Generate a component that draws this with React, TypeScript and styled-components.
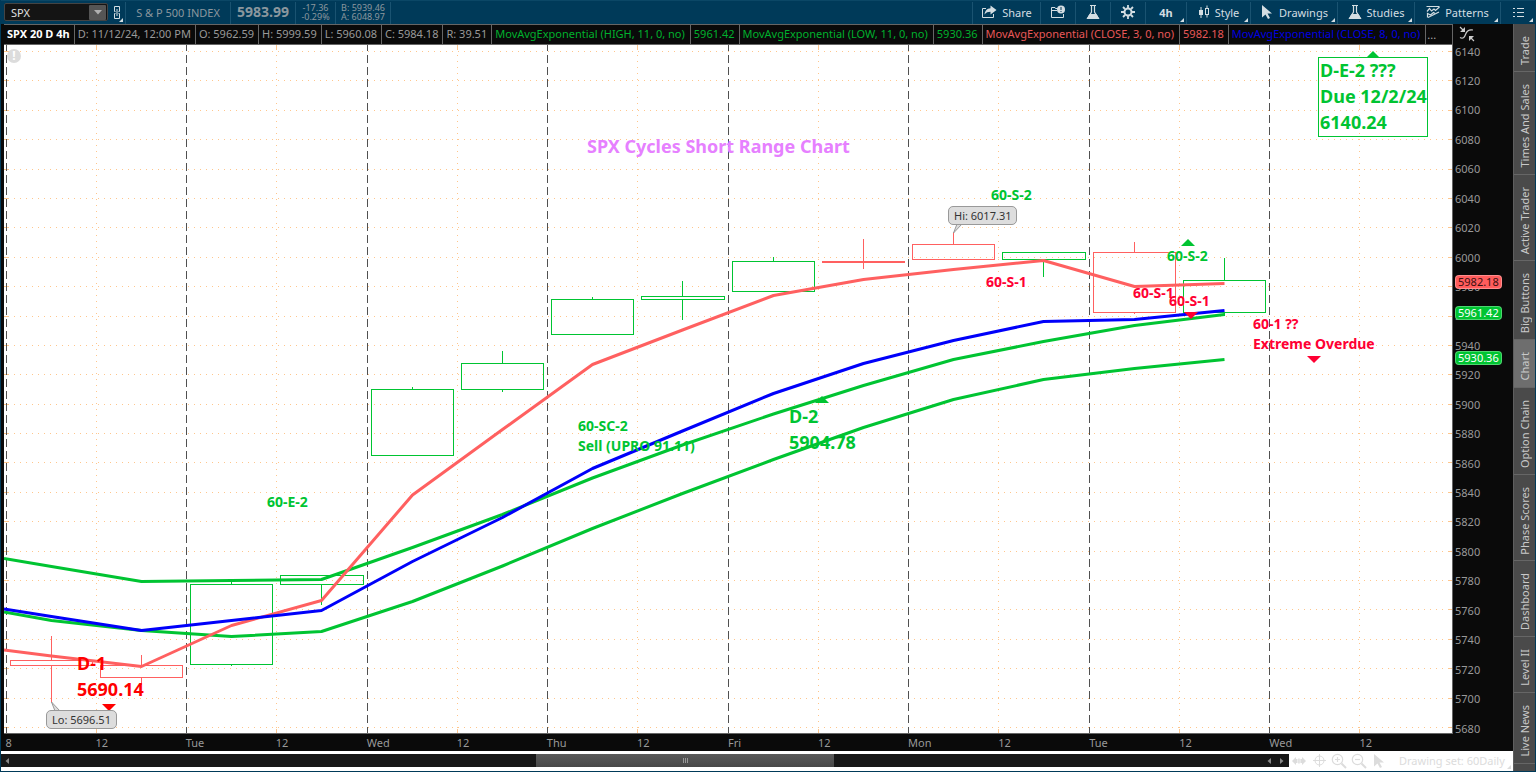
import React from "react";
import styled, { createGlobalStyle, css } from "styled-components";

const GREEN = "#00c432";
const RED = "#ff6060";
const BLUE = "#0000fa";
const ALERT = "#ff0033";

const GlobalStyle = createGlobalStyle`
  * { box-sizing: border-box; }
  html, body { margin: 0; height: 100%; }
  body { background: #003a59; font-family: "Noto Sans", "Open Sans", sans-serif; font-size: 11px; overflow: hidden; }
  button, input { font: inherit; color: inherit; margin: 0; padding: 0; border: 0; background: none; }
  svg { display: block; }
`;

/* ---------- layout ---------- */

const Page = styled.div`
  height: 100vh;
  display: flex;
  flex-direction: column;
  padding: 0 1px 1px;
  background: #003a59;
`;

const Body = styled.div`
  flex: 1;
  min-height: 0;
  display: flex;
`;

const Main = styled.main`
  flex: 1;
  min-width: 0;
  display: flex;
  flex-direction: column;
  background: #ffffff;
`;

const ChartPanel = styled.section`
  flex: 1;
  min-height: 0;
  display: grid;
  grid-template-columns: minmax(0, 1fr) 60px;
  grid-template-rows: 21px minmax(0, 1fr) 17px;
  padding-left: 3px;
  background: #0a0a0a;
`;

/* ---------- top bar ---------- */

const TopBar = styled.header`
  height: 24px;
  flex: none;
  display: flex;
  align-items: stretch;
  padding: 1px 0 0 3px;
  color: #d3dde2;
  border-top: 1px solid #0b4766;
`;

const SymbolBox = styled.div`
  display: flex;
  align-items: center;
  width: 104px;
  height: 18px;
  margin-top: 1px;
  padding-right: 1px;
  border: 1px solid #444;
  border-radius: 2px;
  background: #141414;
`;

const SymbolInput = styled.input`
  flex: 1;
  min-width: 0;
  padding-left: 6px;
  color: #e0e0e0;
  outline: none;
`;

const DropButton = styled.button`
  width: 17px;
  height: 15px;
  display: grid;
  place-items: center;
  background: #555;
  border-radius: 1px;
`;

const LinkButton = styled.button`
  position: relative;
  width: 17px;
  padding-bottom: 2px;
  display: grid;
  place-items: center;
`;

const Corner = styled.span`
  position: absolute;
  right: 2px;
  bottom: 2px;
  border-style: solid;
  border-width: 0 0 4px 4px;
  border-color: transparent transparent #d3dde2 transparent;
`;

const Quote = styled.div<{ $w: number }>`
  width: ${(p) => p.$w}px;
  padding-bottom: 2px;
  display: flex;
  flex-direction: column;
  justify-content: center;
  align-items: center;
  border-left: 1px solid #1a5371;
  color: #8b979e;
  white-space: nowrap;
`;

const Last = styled.strong`
  font-size: 14px;
  line-height: 20px;
  font-weight: 700;
`;

const Small = styled.span`
  font-size: 9px;
  line-height: 9px;
`;

const Spacer = styled.div`
  flex: 1;
  border-left: 1px solid #1a5371;
`;

const ToolButton = styled.button<{ $w: number; $bold?: boolean }>`
  position: relative;
  width: ${(p) => p.$w}px;
  padding-bottom: 2px;
  display: flex;
  align-items: center;
  justify-content: center;
  gap: 5px;
  border-left: 1px solid #1a5371;
  font-weight: ${(p) => (p.$bold ? 700 : 400)};
  white-space: nowrap;
`;

/* ---------- study legend ---------- */

const Legend = styled.div`
  display: flex;
  min-width: 0;
  border: solid #666;
  border-width: 1px 1px 1px 0;
  background: #0a0a0a;
  overflow: hidden;
`;

const LegendCell = styled.span<{ $color?: string; $strong?: boolean; $wide?: boolean }>`
  flex: none;
  padding: 0 ${(p) => (p.$wide ? 5 : 4)}px 0 3px;
  border-right: 1px solid #666;
  line-height: 18px;
  font-weight: ${(p) => (p.$strong ? 700 : 400)};
  color: ${(p) => p.$color || "#999"};
  white-space: nowrap;
`;

const MoreButton = styled.button`
  flex: 1;
  padding-left: 1px;
  text-align: left;
  color: #aaa;
`;

const AxisHead = styled.div`
  padding: 2px 0 0 6px;
`;

/* ---------- plot ---------- */

const Plot = styled.div`
  position: relative;
  min-height: 0;
  background: #ffffff;
  border: solid #666;
  border-width: 0 1px 1px 0;
  overflow: hidden;
`;

const PlotSvg = styled.svg`
  width: 100%;
  height: 100%;
`;

const Note = styled.div<{ $color: string; $large?: boolean; $boxed?: boolean }>`
  position: absolute;
  color: ${(p) => p.$color};
  font-weight: 700;
  white-space: pre;
  ${(p) =>
    p.$large
      ? css`
          font-size: 18px;
          line-height: 26px;
        `
      : css`
          font-size: 14px;
          line-height: 20px;
        `}
  ${(p) =>
    p.$boxed &&
    css`
      outline: 1px solid ${p.$color};
      outline-offset: -1px;
      padding: 0 1px 2px 2px;
    `}
`;

const Callout = styled.div`
  position: absolute;
  height: 19px;
  padding: 0 5px;
  border: 1px solid #999;
  border-radius: 5px;
  background: #dddddd;
  color: #333;
  line-height: 17px;
  white-space: nowrap;
`;

const WarnBadge = styled.span`
  position: absolute;
  left: 3px;
  top: 4px;
  width: 14px;
  height: 14px;
  border-radius: 50%;
  background: #dcdcdc;
  color: #fff;
  font-size: 12px;
  font-weight: 700;
  line-height: 14px;
  text-align: center;
`;

const PriceAxis = styled.div`
  position: relative;
  color: #999;
`;

const PriceTick = styled.span`
  position: absolute;
  left: 2px;
  line-height: 16px;
  transform: translateY(-50%);
`;

const PriceTag = styled.span<{ $bg: string; $fg: string }>`
  position: absolute;
  left: 2px;
  height: 14px;
  padding: 0 2px;
  border: 1px solid rgba(255, 255, 255, 0.3);
  border-radius: 4px;
  background: ${(p) => p.$bg};
  background-clip: border-box;
  color: ${(p) => p.$fg};
  line-height: 12px;
  transform: translateY(-50%);
`;

const TimeAxis = styled.div`
  position: relative;
  color: #999;
`;

const TimeTick = styled.span`
  position: absolute;
  top: 1px;
  line-height: 16px;
`;

/* ---------- bottom strip ---------- */

const BottomBar = styled.footer`
  flex: none;
  height: 20px;
  display: flex;
  align-items: center;
  padding: 0 0 1px;
`;

const ScrollTrack = styled.div`
  flex: 1;
  height: 13px;
  display: flex;
  align-items: center;
  background: #171717;
`;

const ScrollArrow = styled.button`
  width: 13px;
  height: 13px;
  padding-right: 2px;
  display: grid;
  place-items: center;
`;

const ScrollLane = styled.div`
  flex: 1;
  height: 13px;
  display: grid;
  grid-template-columns: 522fr 298fr 429fr;
`;

const Thumb = styled.div`
  grid-column: 2;
  display: grid;
  place-items: center;
  background: linear-gradient(#5a5a5a, #484848);
`;

const DrawTools = styled.div`
  position: relative;
  width: 224px;
  display: flex;
  align-items: center;
  color: #dcdcdc;
`;

const DrawTool = styled.button`
  width: 20px;
  height: 16px;
  display: grid;
  place-items: center;
  flex: none;
`;

const DrawingSet = styled.button`
  margin-left: 10px;
  line-height: 16px;
  white-space: nowrap;
`;

const GrayCorner = styled(Corner)`
  bottom: 0;
  border-bottom-color: #dcdcdc;
`;

/* ---------- side tabs ---------- */

const SideTabs = styled.nav`
  flex: none;
  width: 22px;
  display: flex;
  flex-direction: column;
  background: #4a4a4a;
  border-left: 1px solid #5e5e5e;
  overflow: hidden;
`;

const SideTab = styled.button<{ $active?: boolean }>`
  flex: none;
  display: flex;
  align-items: center;
  justify-content: center;
  padding: 12px 0 6px;
  border-bottom: 1px solid #666;
  background: ${(p) => (p.$active ? "#6e6e6e" : "#4a4a4a")};
  color: #c9c9c9;
`;

const Vertical = styled.span`
  writing-mode: vertical-rl;
  transform: rotate(180deg);
  line-height: 20px;
  white-space: nowrap;
`;

/* ---------- data ---------- */

const VIEW = { x: 4, y: 45, w: 1448, h: 688 };
const left = (x: number) => `${((x - VIEW.x) / VIEW.w) * 100}%`;
const top = (y: number) => `${((y - VIEW.y) / VIEW.h) * 100}%`;
const priceY = (p: number) => 51.5 + (6140 - p) * 1.4696;
const barX = (i: number) => 51.6 + 90.23 * i;
const snap = (v: number) => Math.floor(v) + 0.5;

const prices = Array.from({ length: 24 }, (_, i) => 6140 - i * 20);
const days = ["8", "Tue", "Wed", "Thu", "Fri", "Mon", "Tue", "Wed"];
const dayX = (i: number) => snap(6.35 + 180.45 * i);
const noonX = (i: number) => snap(96.4 + 180.45 * i);

type Candle = { up: boolean; open: number; close: number; high?: number; low?: number };
const candles: Candle[] = [
  { up: false, open: 660.5, close: 665.5, high: 636, low: 703 },
  { up: false, open: 665.5, close: 677.5, high: 655, low: 685 },
  { up: true, open: 584.5, close: 664.5, high: 582, low: 666 },
  { up: true, open: 575.5, close: 584.5, low: 605 },
  { up: true, open: 389.5, close: 455.5, high: 387 },
  { up: true, open: 363.5, close: 389.5, high: 351, low: 392 },
  { up: true, open: 299.5, close: 334.5, high: 297 },
  { up: true, open: 296.5, close: 299.5, high: 281, low: 320 },
  { up: true, open: 261.5, close: 291.5, high: 257 },
  { up: false, open: 261.5, close: 262.5, high: 239, low: 269 },
  { up: false, open: 244.5, close: 259.5, high: 232 },
  { up: true, open: 252.5, close: 259.5, low: 277 },
  { up: false, open: 252.5, close: 312.5, high: 242, low: 314 },
  { up: true, open: 280.5, close: 312.5, high: 258, low: 316 },
];

const averages: { color: string; start: number; values: number[] }[] = [
  { color: GREEN, start: 558.5, values: [566.5, 581.5, 580.5, 579.5, 547.5, 514.5, 478, 445, 414, 385.5, 359.5, 341.5, 325.5, 314.5] },
  { color: GREEN, start: 612, values: [620.5, 630.5, 636.5, 631.5, 601.5, 566, 528.5, 493.5, 459.5, 427.5, 399.5, 379.5, 368.5, 359.5] },
  { color: RED, start: 650, values: [656, 666.5, 625.5, 600.5, 495, 429.5, 364.5, 330, 295.5, 279.5, 269.5, 260.5, 286.5, 283.5] },
  { color: BLUE, start: 609, values: [616.5, 630.5, 620.5, 610.5, 561.5, 517.5, 468.5, 431, 393.5, 363.5, 340.5, 321.5, 319.5, 310.5] },
];

const notes = [
  { x: 587, y: 133, text: "SPX Cycles Short Range Chart", color: "#e680ff", large: true },
  { x: 267, y: 492, text: "60-E-2", color: GREEN },
  { x: 578, y: 416, text: "60-SC-2\nSell (UPRO 91.11)", color: GREEN },
  { x: 789, y: 403, text: "D-2\n5904.78", color: GREEN, large: true },
  { x: 991, y: 185, text: "60-S-2", color: GREEN },
  { x: 986, y: 272, text: "60-S-1", color: ALERT },
  { x: 1133, y: 283, text: "60-S-1", color: ALERT },
  { x: 1169, y: 291, text: "60-S-1", color: ALERT },
  { x: 1167, y: 246, text: "60-S-2", color: GREEN },
  { x: 1253, y: 314, text: "60-1 ??\nExtreme Overdue", color: ALERT },
  { x: 77, y: 650, text: "D-1\n5690.14", color: "#ff0000", large: true },
  { x: 1318, y: 57, text: "D-E-2 ???\nDue 12/2/24\n6140.24", color: GREEN, large: true, boxed: true },
];

const arrows = [
  { x: 1373, y: 58, up: true, color: GREEN },
  { x: 1188, y: 246, up: true, color: GREEN },
  { x: 822, y: 403, up: true, color: GREEN },
  { x: 109, y: 704, up: false, color: "#ff0000" },
  { x: 1191, y: 312, up: false, color: ALERT },
  { x: 1314, y: 356, up: false, color: ALERT },
];

const legend = [
  { text: "SPX 20 D 4h", color: "#ffffff", strong: true },
  { text: "D: 11/12/24, 12:00 PM" },
  { text: "O: 5962.59" },
  { text: "H: 5999.59" },
  { text: "L: 5960.08" },
  { text: "C: 5984.18" },
  { text: "R: 39.51" },
  { text: "MovAvgExponential (HIGH, 11, 0, no)", color: "#00b02d", wide: true },
  { text: "5961.42", color: "#00b02d" },
  { text: "MovAvgExponential (LOW, 11, 0, no)", color: "#00b02d", wide: true },
  { text: "5930.36", color: "#00b02d" },
  { text: "MovAvgExponential (CLOSE, 3, 0, no)", color: "#e85858", wide: true },
  { text: "5982.18", color: "#e85858" },
  { text: "MovAvgExponential (CLOSE, 8, 0, no)", color: "#0000e0", wide: true },
];

const tabs = ["Trade", "Times And Sales", "Active Trader", "Big Buttons", "Chart", "Option Chain", "Phase Scores", "Dashboard", "Level II", "Live News"];

/* ---------- icons ---------- */

const ShareIcon = () => (
  <svg width="16" height="14" viewBox="0 0 16 14" fill="none" stroke="currentColor">
    <path d="M5 3.500H1.500v9h11V9" />
    <path d="M9.500 0.500l6 4.500-6 4.500V6.800C7 6.800 5 7.500 3.500 9.500 4 6 6 3.300 9.500 3.200z" fill="currentColor" stroke="none" />
  </svg>
);

const AlertFolderIcon = () => (
  <svg width="16" height="14" viewBox="0 0 16 14" fill="none" stroke="currentColor">
    <path d="M8 3.500H5.500L5 2.500H1.500v10h12V9M1.500 5.500H7" />
    <circle cx="11" cy="4.500" r="4" fill="currentColor" stroke="none" />
    <path d="M11 2v3M11 6v1" stroke="#003a59" />
  </svg>
);

const FlaskIcon = () => (
  <svg width="14" height="16" viewBox="0 0 14 16" fill="none" stroke="currentColor">
    <path d="M4 1.500h6M5.500 2v6L1.500 14.500h11L8.500 8V2" strokeWidth="1.200" />
    <path d="M3.700 10.500h6.600l2.200 4h-11z" fill="currentColor" />
  </svg>
);

const GearIcon = () => (
  <svg width="14" height="14" viewBox="0 0 14 14" fill="none" stroke="currentColor">
    <circle cx="7" cy="7" r="3.500" strokeWidth="2" />
    <path d="M7 0v3M7 11v3M0 7h3M11 7h3M2 2l2 2M10 10l2 2M12 2l-2 2M4 10l-2 2" strokeWidth="1.800" />
  </svg>
);

const CandleIcon = () => (
  <svg width="12" height="14" viewBox="0 0 12 14" fill="none" stroke="currentColor">
    <path d="M3 2v11M9 0.500v3M9 9.500v3" />
    <rect x="1" y="5" width="4" height="5" fill="currentColor" stroke="none" />
    <rect x="7.500" y="3.500" width="3" height="6" />
  </svg>
);

const PointerIcon = () => (
  <svg width="14" height="14" viewBox="0 0 14 14" fill="currentColor">
    <path d="M2 0l10 8.500H7.500L10 13l-2 1-2.500-4.500L2 12.500z" />
  </svg>
);

const PatternsIcon = () => (
  <svg width="14" height="14" viewBox="0 0 14 14" fill="none" stroke="currentColor" strokeWidth="1.200">
    <path d="M0.500 1.500H13.500M1 6.500l2.500-3L5.500 6l2.500-2 1.500 1.500 4-3.500M2 12.500L13 7" />
    <path d="M1.500 12.500V8.500l3 1.500 3-2.500 1.500 1" />
  </svg>
);

const ListIcon = () => (
  <svg width="11" height="11" viewBox="0 0 11 11" stroke="currentColor">
    <path d="M0 1.500h2M4 1.500h7M0 5.500h2M4 5.500h7M0 9.500h2M4 9.500h7" />
  </svg>
);

const ChainIcon = () => (
  <svg width="6" height="13" viewBox="0 0 6 13" fill="none" stroke="currentColor">
    <path d="M0.500 5.500V0.500h5v5M0.500 7.500v5h5v-5M3 3v7M0.500 5.500h1M4.500 5.500h1M0.500 7.500h1M4.500 7.500h1" />
  </svg>
);

const FitIcon = () => (
  <svg width="16" height="16" viewBox="0 0 16 16" fill="none" stroke="#cccccc" strokeWidth="1.200">
    <path d="M1 1l3.500 3.500M15 15l-3.500-3.500" />
    <path d="M6 1v5H1zM10 15v-5h5z" fill="#cccccc" stroke="none" />
    <path d="M1 11.500c3 1.500 4.500 0 5.500-3S9 3 14 4" />
  </svg>
);

const Chevron = ({ dir }: { dir: "left" | "right" }) => (
  <svg width="4" height="6" viewBox="0 0 4 6" fill="#888888">
    <path d={dir === "left" ? "M4 0v6L0.500 3z" : "M0 0v6l3.500-3z"} />
  </svg>
);

const PanIcon = () => (
  <svg width="14" height="8" viewBox="0 0 14 8" fill="currentColor">
    <path d="M0 4l4-4v2h1.500v4H4v2zM14 4l-4-4v2H8.500v4H10v2zM6 1.500h.800v5H6zM7.300 1.500h.8v5h-.8z" />
  </svg>
);

const CrosshairIcon = () => (
  <svg width="13" height="13" viewBox="0 0 13 13" fill="none" stroke="currentColor">
    <circle cx="6.500" cy="6.500" r="4.500" />
    <path d="M6.500 0v13M0 6.500h13" />
  </svg>
);

const LensIcon = ({ plus }: { plus?: boolean }) => (
  <svg width="16" height="16" viewBox="0 0 16 16" fill="none" stroke="currentColor" strokeWidth="1.200">
    <circle cx="6.500" cy="6.500" r="5.200" />
    <path d="M10.500 10.500L15 15" strokeWidth="2" />
    <path d={plus ? "M4 6.500h5M6.500 4v5" : "M4 6.500h5"} />
  </svg>
);

/* ---------- chart ---------- */

function ChartDrawing() {
  const right = VIEW.x + VIEW.w;
  const bottom = VIEW.y + VIEW.h;
  return (
    <PlotSvg viewBox={`${VIEW.x} ${VIEW.y} ${VIEW.w} ${VIEW.h}`} preserveAspectRatio="none" role="img" aria-label="SPX four hour candles">
      <g stroke="#ffc68c" shapeRendering="crispEdges">
        {prices.map((p) => {
          const y = snap(priceY(p));
          return (
            <g key={p}>
              <path d={`M${VIEW.x} ${y}H${right}`} strokeDasharray="1 5" strokeDashoffset="2" />
              <path d={`M${VIEW.x} ${y}h4M${right - 4} ${y}H${right}`} />
            </g>
          );
        })}
        {days.map((_, i) => (
          <g key={i}>
            <path d={`M${noonX(i)} ${VIEW.y}V${bottom}`} strokeDasharray="1 5" strokeDashoffset="2" />
            <path d={`M${noonX(i)} ${VIEW.y}v5M${noonX(i)} ${bottom - 4}v4`} />
          </g>
        ))}
      </g>
      <g stroke="#505050" shapeRendering="crispEdges" strokeDasharray="8 4" strokeDashoffset="2">
        {days.map((_, i) => (
          <path key={i} d={`M${dayX(i)} ${VIEW.y}V${bottom}`} />
        ))}
      </g>
      <g fill="none" shapeRendering="crispEdges">
        {candles.map((c, i) => {
          const x1 = snap(barX(i) - 41.3);
          const x2 = snap(barX(i) + 40.9);
          const mid = snap(barX(i) - 0.3);
          return (
            <g key={i} stroke={c.up ? GREEN : RED}>
              <rect x={x1} y={c.open} width={x2 - x1} height={c.close - c.open} />
              {c.high && <path d={`M${mid} ${c.high}V${c.open}`} />}
              {c.low && <path d={`M${mid} ${c.close}V${c.low}`} />}
            </g>
          );
        })}
      </g>
      <g fill="none" strokeWidth="3" strokeLinejoin="round">
        {averages.map((a, n) => (
          <polyline
            key={n}
            stroke={a.color}
            points={[`${VIEW.x},${a.start}`, ...a.values.map((v, i) => `${snap(barX(i) - 0.3)},${v}`)].join(" ")}
          />
        ))}
      </g>
      {arrows.map((a, i) => (
        <path key={i} fill={a.color} d={a.up ? `M${a.x - 7} ${a.y}h14l-7 -7z` : `M${a.x - 7} ${a.y}h14l-7 7z`} />
      ))}
      <g fill="#dddddd" stroke="#999999">
        <path d="M953.500 233l3.500-9h5z" />
        <path d="M51.500 702l3.500 9h5z" />
      </g>
    </PlotSvg>
  );
}

export default function App() {
  return (
    <Page>
      <GlobalStyle />
      <TopBar>
        <SymbolBox>
          <SymbolInput aria-label="Symbol" defaultValue="SPX" />
          <DropButton aria-label="Choose symbol">
            <svg width="8" height="5" viewBox="0 0 8 5" fill="#b0b0b0">
              <path d="M0 0h8L4 4.500z" />
            </svg>
          </DropButton>
        </SymbolBox>
        <LinkButton aria-label="Link symbol">
          <ChainIcon />
          <Corner />
        </LinkButton>
        <Quote $w={105}>S &amp; P 500 INDEX</Quote>
        <Quote $w={65}>
          <Last>5983.99</Last>
        </Quote>
        <Quote $w={40}>
          <Small>-17.36</Small>
          <Small>-0.29%</Small>
        </Quote>
        <Quote $w={55}>
          <Small>B: 5939.46</Small>
          <Small>A: 6048.97</Small>
        </Quote>
        <Spacer />
        <ToolButton $w={68}>
          <ShareIcon />
          Share
        </ToolButton>
        <ToolButton $w={35} aria-label="Alerts">
          <AlertFolderIcon />
        </ToolButton>
        <ToolButton $w={35} aria-label="Edit studies">
          <FlaskIcon />
        </ToolButton>
        <ToolButton $w={35} aria-label="Chart settings">
          <GearIcon />
        </ToolButton>
        <ToolButton $w={41} $bold>
          4h
          <Corner />
        </ToolButton>
        <ToolButton $w={64}>
          <CandleIcon />
          Style
          <Corner />
        </ToolButton>
        <ToolButton $w={87}>
          <PointerIcon />
          Drawings
          <Corner />
        </ToolButton>
        <ToolButton $w={77}>
          <FlaskIcon />
          Studies
          <Corner />
        </ToolButton>
        <ToolButton $w={86}>
          <PatternsIcon />
          Patterns
          <Corner />
        </ToolButton>
        <ToolButton $w={35} aria-label="More">
          <ListIcon />
          <Corner />
        </ToolButton>
      </TopBar>

      <Body>
        <Main>
          <ChartPanel>
            <Legend>
              {legend.map((l) => (
                <LegendCell key={l.text} $color={l.color} $strong={l.strong} $wide={l.wide}>
                  {l.text}
                </LegendCell>
              ))}
              <MoreButton>...</MoreButton>
            </Legend>
            <AxisHead>
              <FitIcon />
            </AxisHead>

            <Plot>
              <ChartDrawing />
              {notes.map((n, i) => (
                <Note key={i} $color={n.color} $large={n.large} $boxed={n.boxed} style={{ left: left(n.x), top: top(n.y) }}>
                  {n.text}
                </Note>
              ))}
              <Callout style={{ left: left(948), top: top(206) }}>Hi: 6017.31</Callout>
              <Callout style={{ left: left(46), top: top(710) }}>Lo: 5696.51</Callout>
              <WarnBadge>!</WarnBadge>
            </Plot>
            <PriceAxis>
              {prices.map((p) => (
                <PriceTick key={p} style={{ top: top(priceY(p)) }}>
                  {p}
                </PriceTick>
              ))}
              <PriceTag $bg="#ff5c5c" $fg="#3a1010" style={{ top: top(282) }}>5982.18</PriceTag>
              <PriceTag $bg={GREEN} $fg="#ffffff" style={{ top: top(313) }}>5961.42</PriceTag>
              <PriceTag $bg={GREEN} $fg="#ffffff" style={{ top: top(358) }}>5930.36</PriceTag>
            </PriceAxis>

            <TimeAxis>
              {days.map((d, i) => (
                <React.Fragment key={i}>
                  <TimeTick style={{ left: left(dayX(i) - 1) }}>{d}</TimeTick>
                  <TimeTick style={{ left: left(noonX(i) - 1) }}>12</TimeTick>
                </React.Fragment>
              ))}
            </TimeAxis>
          </ChartPanel>

          <BottomBar>
            <ScrollTrack>
              <ScrollArrow aria-label="Scroll left">
                <Chevron dir="left" />
              </ScrollArrow>
              <ScrollLane>
                <Thumb>
                  <svg width="5" height="5" viewBox="0 0 5 5" stroke="#999999">
                    <path d="M0.500 0v5M2.500 0v5M4.500 0v5" />
                  </svg>
                </Thumb>
              </ScrollLane>
              <ScrollArrow aria-label="Step left">
                <Chevron dir="left" />
              </ScrollArrow>
              <ScrollArrow aria-label="Step right">
                <Chevron dir="right" />
              </ScrollArrow>
            </ScrollTrack>
            <DrawTools>
              <DrawTool aria-label="Pan">
                <PanIcon />
              </DrawTool>
              <DrawTool aria-label="Crosshair">
                <CrosshairIcon />
              </DrawTool>
              <DrawTool aria-label="Zoom in">
                <LensIcon plus />
              </DrawTool>
              <DrawTool aria-label="Zoom out">
                <LensIcon />
              </DrawTool>
              <DrawTool aria-label="Pointer">
                <PointerIcon />
              </DrawTool>
              <DrawingSet>Drawing set: 60Daily</DrawingSet>
              <GrayCorner />
            </DrawTools>
          </BottomBar>
        </Main>

        <SideTabs>
          {tabs.map((t) => (
            <SideTab key={t} $active={t === "Chart"}>
              <Vertical>{t}</Vertical>
            </SideTab>
          ))}
        </SideTabs>
      </Body>
    </Page>
  );
}
